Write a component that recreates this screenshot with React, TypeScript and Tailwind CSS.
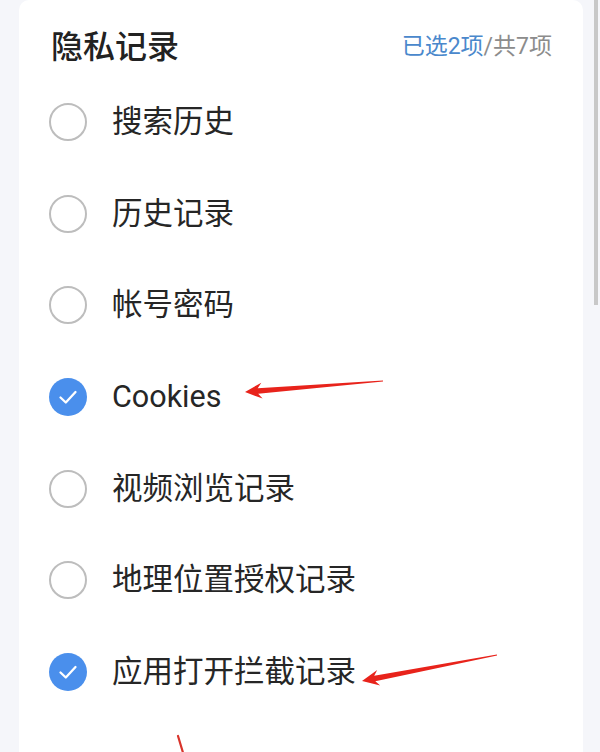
import React from "react";

const items: { label: string; checked: boolean }[] = [
  { label: "搜索历史", checked: false },
  { label: "历史记录", checked: false },
  { label: "帐号密码", checked: false },
  { label: "Cookies", checked: true },
  { label: "视频浏览记录", checked: false },
  { label: "地理位置授权记录", checked: false },
  { label: "应用打开拦截记录", checked: true },
];

function arrowPoints(tx: number, ty: number, ex: number, ey: number) {
  const dx = ex - tx;
  const dy = ey - ty;
  const len = Math.hypot(dx, dy);
  const ux = dx / len;
  const uy = dy / len;
  const nx = -uy;
  const ny = ux;
  const headLen = 17;
  const headW = 8;
  const shaftW = 2.8;
  const tailW = 0.6;
  const hx = tx + ux * headLen;
  const hy = ty + uy * headLen;
  const nk = tx + ux * (headLen - 4);
  const nky = ty + uy * (headLen - 4);
  const pts = [
    [tx, ty],
    [hx + nx * headW, hy + ny * headW],
    [nk + nx * shaftW, nky + ny * shaftW],
    [ex + nx * tailW, ey + ny * tailW],
    [ex - nx * tailW, ey - ny * tailW],
    [nk - nx * shaftW, nky - ny * shaftW],
    [hx - nx * headW, hy - ny * headW],
  ];
  return pts.map((p) => `${p[0].toFixed(1)},${p[1].toFixed(1)}`).join(" ");
}

function Radio({ checked }: { checked: boolean }) {
  if (checked) {
    return (
      <div className="w-[38px] h-[38px] rounded-full bg-[#4a8fec] flex items-center justify-center shrink-0">
        <svg width="22" height="22" viewBox="0 0 22 22" fill="none">
          <path d="M3.5 11.5 L8.8 16.5 L18.5 6" stroke="white" strokeWidth="2.3" strokeLinecap="round" strokeLinejoin="round" />
        </svg>
      </div>
    );
  }
  return <div className="w-[38px] h-[38px] rounded-full border-2 border-[#bdbdbd] bg-white shrink-0" />;
}

export default function App() {
  return (
    <div
      className="relative w-[600px] h-[752px] overflow-hidden bg-[#f5f6fa] flex"
      style={{ fontFamily: "Roboto, 'Noto Sans CJK SC', 'Noto Sans', sans-serif" }}
    >
      <div className="ml-[19px] w-[564px] bg-white rounded-t-[10px] flex flex-col">
        <div className="h-[76px] pt-[30px] pl-[32px] pr-[31px] flex justify-between items-start">
          <div className="text-[32px] leading-[34px] font-medium text-[#222222]">隐私记录</div>
          <div className="text-[23px] leading-[34px]">
            <span className="text-[#4a88cc]">已选2项</span>
            <span className="text-[#8c8c8c]">/共7项</span>
          </div>
        </div>
        {items.map((it) => (
          <div key={it.label} className="h-[91.7px] pl-[30px] flex items-center gap-[25px] shrink-0">
            <Radio checked={it.checked} />
            <span className="text-[30.5px] leading-[36px] text-[#262626]">{it.label}</span>
          </div>
        ))}
      </div>

      <div className="absolute left-[594px] top-0 w-[4px] h-[305px] bg-[#c8c8c8]" />

      <svg className="absolute left-0 top-0 pointer-events-none" width="600" height="752" viewBox="0 0 600 752">
        <polygon points={arrowPoints(245, 392, 383, 381)} fill="#e8231b" />
        <polygon points={arrowPoints(362, 681, 497, 655)} fill="#e8231b" />
        <line x1="178" y1="736" x2="184" y2="756" stroke="#d9342b" strokeWidth="2.2" strokeLinecap="round" />
      </svg>
    </div>
  );
}
